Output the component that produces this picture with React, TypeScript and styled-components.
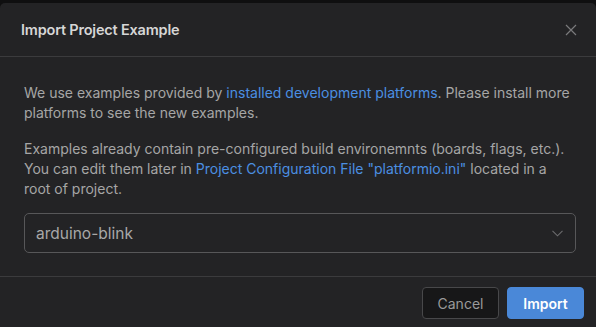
import styled, { createGlobalStyle } from "styled-components";

const GlobalStyle = createGlobalStyle`
  html, body {
    margin: 0;
    padding: 0;
    background-color: #0f0f10;
    overflow: hidden;
  }
  body {
    font-family: "Inter", "Liberation Sans", sans-serif;
  }
`;

const Modal = styled.div`
  margin-top: 3px;
  width: 596px;
  height: 324px;
  background-color: #232325;
  border-radius: 5px 5px 0 0;
  display: flex;
  flex-direction: column;
`;

const Header = styled.div`
  height: 53px;
  padding: 0 18px 0 21px;
  display: flex;
  align-items: center;
  justify-content: space-between;
  border-bottom: 1px solid #3b3b3d;
`;

const Title = styled.div`
  font-size: 14.5px;
  font-weight: 600;
  letter-spacing: -0.2px;
  color: #d6d6d6;
`;

const CloseButton = styled.button`
  background: none;
  border: none;
  padding: 0;
  width: 14px;
  height: 14px;
  display: flex;
  align-items: center;
  justify-content: center;
  cursor: pointer;
`;

const Body = styled.div`
  padding: 26px 20px 23px 24px;
  border-bottom: 1px solid #3b3b3d;
`;

const Paragraph = styled.p`
  margin: 0 0 16px;
  font-size: 14px;
  line-height: 20px;
  color: #a6a6a6;
`;

const Link = styled.a`
  color: #4b8fe2;
  text-decoration: none;
`;

const Select = styled.div`
  margin-top: -2px;
  height: 38px;
  border: 1px solid #575759;
  border-radius: 5px;
  display: flex;
  align-items: center;
  justify-content: space-between;
  padding: 0 12px 0 11px;
  font-size: 15.5px;
  color: #a8a8a8;
`;

const Footer = styled.div`
  display: flex;
  justify-content: flex-end;
  gap: 8px;
  padding: 10px 12px 0;
`;

const Button = styled.button<{ $primary?: boolean }>`
  width: 77px;
  height: 32px;
  border-radius: 4px;
  font-family: inherit;
  font-size: 14px;
  font-weight: ${(p) => (p.$primary ? 600 : 400)};
  color: ${(p) => (p.$primary ? "#ffffff" : "#9a9a9a")};
  background-color: ${(p) => (p.$primary ? "#4a88d8" : "#171718")};
  border: 1px solid ${(p) => (p.$primary ? "#4a88d8" : "#48484a")};
  cursor: pointer;
`;

export default function App() {
  return (
    <>
      <GlobalStyle />
      <Modal>
        <Header>
          <Title>Import Project Example</Title>
          <CloseButton aria-label="Close">
            <svg width="12" height="12" viewBox="0 0 12 12">
              <path d="M1 1L11 11M11 1L1 11" stroke="#7a7a7c" strokeWidth="1.2" />
            </svg>
          </CloseButton>
        </Header>
        <Body>
          <Paragraph>
            We use examples provided by <Link>installed development platforms</Link>. Please install more
            platforms to see the new examples.
          </Paragraph>
          <Paragraph>
            Examples already contain pre-configured build environemnts (boards, flags, etc.). You can edit
            them later in <Link>Project Configuration File "platformio.ini"</Link> located in a root of
            project.
          </Paragraph>
          <Select>
            <span>arduino-blink</span>
            <svg width="11" height="7" viewBox="0 0 11 7">
              <path d="M0.5 0.8L5.5 5.8L10.5 0.8" stroke="#6c6c6e" strokeWidth="1.1" fill="none" />
            </svg>
          </Select>
        </Body>
        <Footer>
          <Button>Cancel</Button>
          <Button $primary>Import</Button>
        </Footer>
      </Modal>
    </>
  );
}
